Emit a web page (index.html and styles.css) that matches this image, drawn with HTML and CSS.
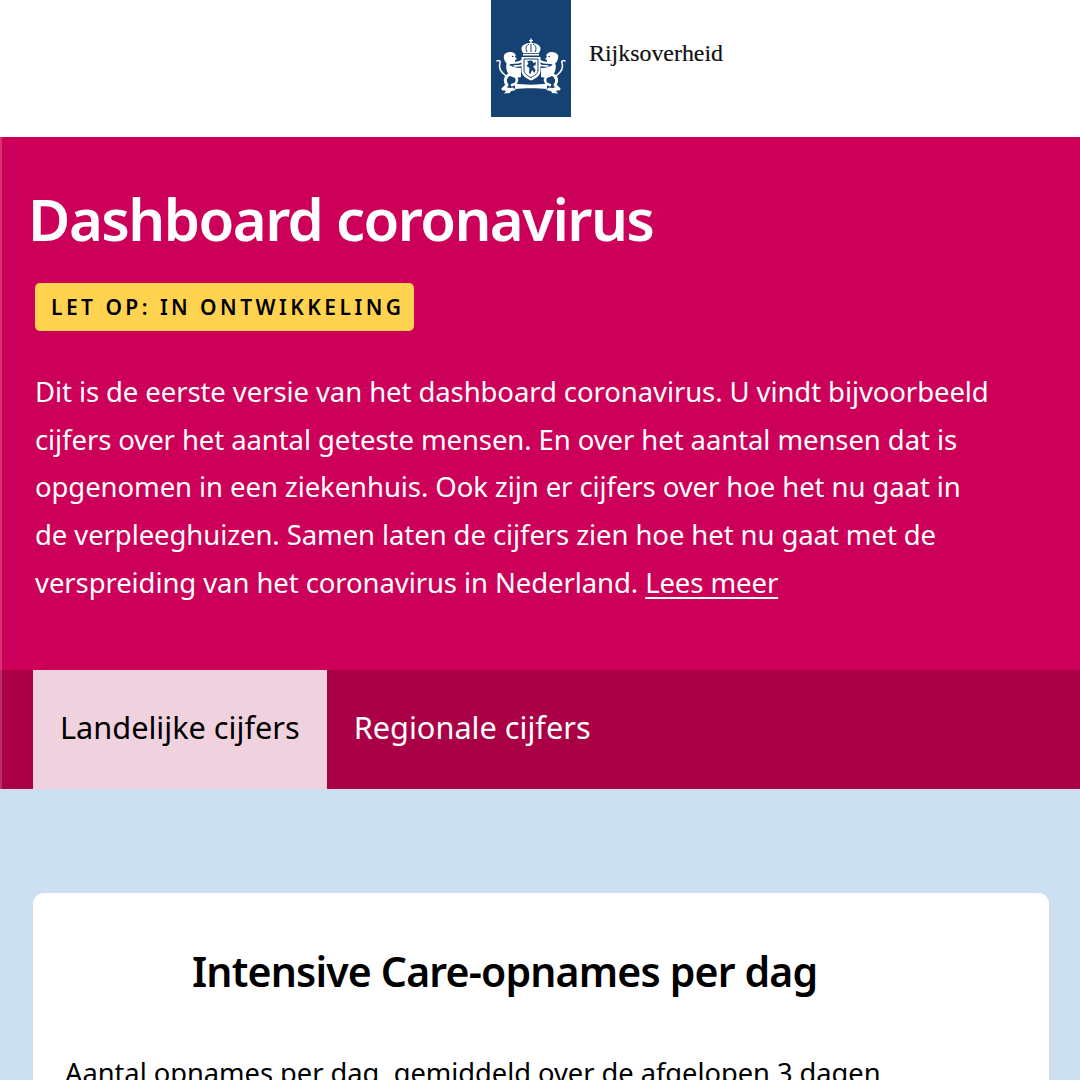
FILE: index.html
```html
<!DOCTYPE html>
<html lang="nl">
<head>
<meta charset="utf-8">
<title>Dashboard coronavirus</title>
<link rel="stylesheet" href="styles.css">
</head>
<body>
<header class="top">
  <div class="logo-block">
    <svg class="crest" viewBox="0 0 80 70" aria-hidden="true">
      <defs>
        <g id="lion">
          <path fill="#fff" d="M13 25c2-3 7-4 10-2 2 1 2 3 1 4l2 2-2 1 0 2c-1 2-3 2-4 2l-2 1c-3-1-6-6-5-10z"/>
          <path fill="#fff" d="M16 33c3 3 8 5 14 5v9c-4 1-9 1-12-2-2-3-4-8-2-12z"/>
          <path fill="none" stroke="#fff" stroke-width="2" stroke-linecap="round" d="M22 32.500c3 1 6 0 9-1.500"/>
          <path fill="none" stroke="#fff" stroke-width="1.500" stroke-linecap="round" d="M23 36c3 0 6 0 8-1"/>
          <path fill="none" stroke="#fff" stroke-width="1.500" stroke-linecap="round" d="M15 46c-4-3-8-8-6-13 1-2-1-3-3-2"/>
          <path fill="none" stroke="#fff" stroke-width="3" stroke-linecap="round" stroke-linejoin="round" d="M19 44c-5 3-6 7-3 11l-4 4h5"/>
          <path fill="none" stroke="#fff" stroke-width="2.500" stroke-linecap="round" stroke-linejoin="round" d="M24 46c3 3 2 6 0 8l-3 1"/>
          <path fill="#154273" d="M21 26h1.500v1H21z"/>
        </g>
      </defs>
      <use href="#lion"/>
      <use href="#lion" transform="matrix(-1 0 0 1 80 0)"/>
      <g fill="#fff">
        <path d="M39.300 8.500h1.400v1.500h1.300v1.200h-1.300v2h-1.400v-2H38V10h1.300z"/>
        <path d="M40 13c5 0 9 2 9.500 5 .3 2-.8 3.500-1.500 5H32c-.7-1.500-1.800-3-1.500-5 .5-3 4.500-5 9.500-5z"/>
        <rect x="32" y="23.800" width="16" height="1.700"/>
        <path d="M30.500 27h19v13.500c0 5-4.500 8-9.500 10-5-2-9.500-5-9.500-10z"/>
        <path d="M24 53.500c7 1.500 25 1.500 32 0v5.500c-7-1-25-1-32 0z"/>
        <path d="M13 59l9-1.500 3 2.500c-3 .5-6 1-6 3l-6 .5 2-2.500z"/>
        <path d="M67 59l-9-1.500-3 2.500c3 .5 6 1 6 3l6 .5-2-2.500z"/>
      </g>
      <g fill="none" stroke="#154273" stroke-width="1">
        <path d="M36 22c-1.500-3-1.500-6 2-8"/>
        <path d="M44 22c1.500-3 1.500-6-2-8"/>
        <path d="M40 14v8"/>
        <path d="M33 29h14v11c0 3.500-3.500 6-7 7.500-3.500-1.500-7-4-7-7.500z"/>
      </g>
      <path fill="#154273" d="M36 31l5-.5 1.500 2.500 2.500-1-.5 3-2.500 1.500 2.500 3.500-1 3-2.500-3-1.500 4-1.500-1 .5-5-3-2 2-2.500z"/>
    </svg>
  </div>
  <span class="wordmark">Rijksoverheid</span>
</header>

<section class="hero">
  <h1 class="hero-title">Dashboard coronavirus</h1>
  <span class="badge">LET OP: IN ONTWIKKELING</span>
  <p class="intro">Dit is de eerste versie van het dashboard coronavirus. U vindt bijvoorbeeld<br>cijfers over het aantal geteste mensen. En over het aantal mensen dat is<br>opgenomen in een ziekenhuis. Ook zijn er cijfers over hoe het nu gaat in<br>de verpleeghuizen. Samen laten de cijfers zien hoe het nu gaat met de<br>verspreiding van het coronavirus in Nederland. <a class="more" href="#">Lees meer</a></p>
</section>

<nav class="tabs">
  <a class="tab tab-active" href="#">Landelijke cijfers</a>
  <a class="tab" href="#">Regionale cijfers</a>
</nav>

<main class="content">
  <article class="card">
    <h2 class="card-title">Intensive Care-opnames per dag</h2>
    <p class="card-text">Aantal opnames per dag, gemiddeld over de afgelopen 3 dagen</p>
  </article>
</main>
</body>
</html>
```

FILE: styles.css
```css
* { box-sizing: border-box; }
html, body { margin: 0; height: 1080px; overflow: hidden; }
body {
  font-family: "Noto Sans", "Open Sans", sans-serif;
  background: #cde0f1;
  color: #000;
}
.top {
  height: 137px;
  background: #fff;
  display: flex;
  align-items: flex-start;
  padding-left: 491px;
}
.logo-block {
  width: 80px;
  height: 117px;
  background: #154273;
  padding-top: 30px;
}
.crest { display: block; width: 80px; height: 70px; }
.wordmark {
  font-family: "Liberation Serif", serif;
  font-size: 23.9px;
  line-height: 26px;
  margin: 40px 0 0 18px;
  color: #111;
  -webkit-text-stroke: 0.2px #111;
}
.hero {
  height: 533px;
  background: #cc0058;
  border-left: 2px solid #d6306f;
  color: #fff;
  padding: 50px 0 0 26px;
}
.hero-title {
  margin: 0;
  font-size: 58px;
  line-height: 64px;
  font-weight: 600;
  letter-spacing: -1.55px;
  white-space: nowrap;
}
.badge {
  display: block;
  width: 379px;
  height: 48px;
  margin: 32px 0 0 7px;
  background: #ffd34f;
  border-radius: 5px;
  color: #000;
  font-size: 21px;
  line-height: 48px;
  font-weight: 600;
  letter-spacing: 3.45px;
  padding-left: 16px;
  white-space: nowrap;
}
.intro {
  margin: 37px 0 0 7px;
  font-size: 27.5px;
  letter-spacing: -0.09px;
  line-height: 47.7px;
  white-space: nowrap;
}
.more { color: #fff; text-decoration: underline; text-underline-offset: 4px; text-decoration-thickness: 2px; }
.tabs {
  height: 118.5px;
  background: #a90046;
  border-left: 2px solid #bd2e66;
  display: flex;
  padding-left: 31px;
}
.tab {
  display: block;
  padding: 0 27px;
  font-size: 30.7px;
  line-height: 114px;
  color: #fff;
  text-decoration: none;
  white-space: nowrap;
}
.tab-active { background: #efd2dd; color: #000; }
.content { padding: 104.5px 31px 0 33px; }
.card {
  background: #fff;
  border-radius: 11px 11px 0 0;
  height: 187px;
  padding: 50px 32px 0;
}
.card-title {
  margin: 0 0 0 127px;
  font-size: 41px;
  line-height: 56px;
  font-weight: 600;
  letter-spacing: -0.82px;
  white-space: nowrap;
}
.card-text {
  margin: 54px 0 0;
  font-size: 27.3px;
  line-height: 40px;
  letter-spacing: -0.03px;
  white-space: nowrap;
}
```
